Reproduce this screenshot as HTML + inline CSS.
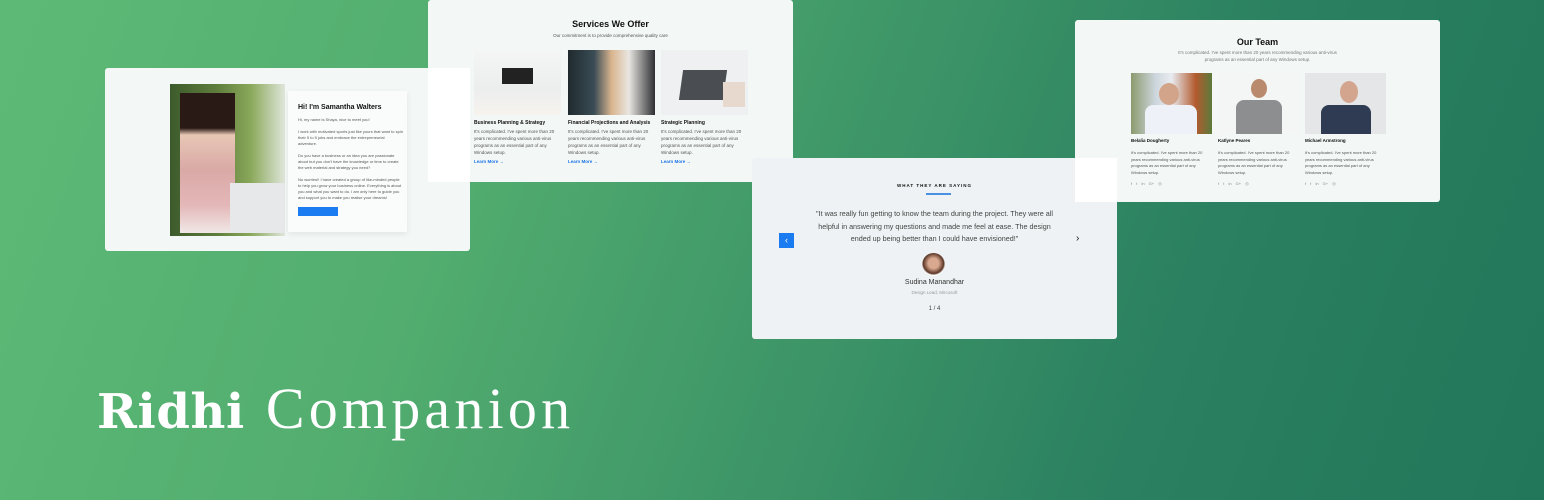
<!DOCTYPE html>
<html><head><meta charset="utf-8"><style>
*{margin:0;padding:0;box-sizing:border-box}
body{width:1544px;height:500px;overflow:hidden;position:relative;font-family:"Liberation Sans",sans-serif;
background:linear-gradient(110deg,#5dba76 0%,#52ad6f 30%,#3c9467 55%,#2a8060 75%,#22765a 100%)}
.c{position:absolute;background:#f3f7f5;border-radius:3px;overflow:hidden;color:#222}
.t{position:absolute;font-size:5px;line-height:7px;color:#555}
.h{position:absolute;font-weight:bold;color:#111}
.ph{position:absolute}
.lm{position:absolute;font-size:4.5px;color:#1a73e8;font-weight:bold}
</style></head><body>
<!-- card1 -->
<div class="c" style="left:105px;top:68px;width:365px;height:183px">
 <div class="ph" style="left:65px;top:16px;width:115px;height:152px;background:linear-gradient(90deg,#3d5a2c,#5e7d3c 40%,#8aa85a 70%,#dfe6da)"></div>
 <div class="ph" style="left:75px;top:25px;width:55px;height:140px;background:linear-gradient(180deg,#2a1a15 0,#2a1a15 25%,#e8c7b5 30%,#d9a9a6 55%,#e4b7b8 80%,#f0e8e6)"></div>
 <div class="ph" style="left:125px;top:115px;width:55px;height:50px;background:#e6e8ea"></div>
 <div class="ph" style="left:183px;top:23px;width:119px;height:141px;background:#fafbfb;box-shadow:0 2px 6px rgba(0,0,0,.08)"></div>
 <div class="h" style="left:193px;top:36px;font-size:7px">Hi! I'm Samantha Walters</div>
 <div class="t" style="left:193px;top:49px;width:105px;font-size:4px;line-height:6px">Hi, my name is Shaya, nice to meet you!<br><br style="line-height:3px">I work with motivated sports just like yours that want to spin their 5 to 5 jobs and embrace the entrepreneurial adventure.<br><br style="line-height:3px">Do you have a business or an idea you are passionate about but you don't have the knowledge or time to create the web material and strategy you need?<br><br style="line-height:3px">No worries!! I have created a group of like-minded people to help you grow your business online. Everything is about you and what you want to do. I am only here to guide you and support you to make you realise your dreams!</div>
 <div class="ph" style="left:193px;top:139px;width:40px;height:9px;background:#1a7cf0"></div>
</div>
<!-- card2 -->
<div class="c" style="left:428px;top:0;width:365px;height:182px">
 <div class="h" style="left:0;width:365px;text-align:center;top:19px;font-size:9px">Services We Offer</div>
 <div class="t" style="left:0;width:365px;text-align:center;top:32px;font-size:4.5px">Our commitment is to provide comprehensive quality care</div>
 <div class="ph" style="left:46px;top:50px;width:87px;height:65px;background:linear-gradient(180deg,#f4f5f5,#eceeee 60%,#f7f3ee)"><div style="position:absolute;left:28px;top:18px;width:31px;height:16px;background:#222"></div></div>
 <div class="ph" style="left:140px;top:50px;width:87px;height:65px;background:linear-gradient(90deg,#1f2a2e,#3a4c55 30%,#d9b48e 50%,#e8e6e2 70%,#2e2f33)"></div>
 <div class="ph" style="left:233px;top:50px;width:87px;height:65px;background:#eef0f1"><div style="position:absolute;left:20px;top:20px;width:44px;height:30px;background:#4a4d52;transform:skewX(-8deg)"></div><div style="position:absolute;left:62px;top:32px;width:22px;height:25px;background:#e8d9cf"></div></div>
 <div class="h" style="left:46px;top:120px;font-size:5px">Business Planning &amp; Strategy</div>
 <div class="h" style="left:140px;top:120px;font-size:5px">Financial Projections and Analysis</div>
 <div class="h" style="left:233px;top:120px;font-size:5px">Strategic Planning</div>
 <div class="t" style="left:46px;top:128px;width:86px;font-size:4.5px">It's complicated. I've spent more than 20 years recommending various anti-virus programs as an essential part of any Windows setup.</div>
 <div class="t" style="left:140px;top:128px;width:86px;font-size:4.5px">It's complicated. I've spent more than 20 years recommending various anti-virus programs as an essential part of any Windows setup.</div>
 <div class="t" style="left:233px;top:128px;width:86px;font-size:4.5px">It's complicated. I've spent more than 20 years recommending various anti-virus programs as an essential part of any Windows setup.</div>
 <div class="lm" style="left:46px;top:159px">Learn More →</div><div class="lm" style="left:140px;top:159px">Learn More →</div><div class="lm" style="left:233px;top:159px">Learn More →</div>
</div>
<div style="position:absolute;left:428px;top:68px;width:42px;height:114px;background:#fff"></div>
<!-- card3 -->
<div class="c" style="left:752px;top:158px;width:365px;height:181px;background:#eef2f4">
 <div class="h" style="left:0;width:365px;text-align:center;top:25px;font-size:4.5px;letter-spacing:1px">WHAT THEY ARE SAYING</div>
 <div class="ph" style="left:174px;top:35px;width:25px;height:1.5px;background:#4a90e2"></div>
 <div class="t" style="left:60px;width:245px;text-align:center;top:50px;font-size:7.2px;line-height:12.5px;color:#444">"It was really fun getting to know the team during the project. They were all helpful in answering my questions and made me feel at ease. The design ended up being better than I could have envisioned!"</div>
 <div class="ph" style="left:27px;top:75px;width:15px;height:15px;background:#1a7cf0;color:#fff;font-size:9px;text-align:center;line-height:15px">‹</div>
 <div class="ph" style="left:324px;top:75px;font-size:10px;color:#111">›</div>
 <div class="ph" style="left:170px;top:95px;width:23px;height:23px;border-radius:50%;background:radial-gradient(circle at 50% 45%,#d9a98f 30%,#5a3426 60%,#fff 70%)"></div>
 <div class="t" style="left:0;width:365px;text-align:center;top:121px;font-size:7px;color:#333">Sudina Manandhar</div>
 <div class="t" style="left:0;width:365px;text-align:center;top:131px;font-size:4.5px;color:#999">Design Lead, Mircosoft</div>
 <div class="t" style="left:0;width:365px;text-align:center;top:148px;font-size:6px;color:#444">1 / 4</div>
</div>
<!-- card4 -->
<div class="c" style="left:1075px;top:20px;width:365px;height:182px">
 <div class="h" style="left:0;width:365px;text-align:center;top:17px;font-size:9px">Our Team</div>
 <div class="t" style="left:100px;width:165px;text-align:center;top:29px;font-size:4.5px;color:#777">It's complicated. I've spent more than 20 years recommending various anti-virus programs as an essential part of any Windows setup.</div>
 <div class="ph" style="left:56px;top:53px;width:81px;height:61px;background:linear-gradient(90deg,#8c9a6e,#cdd6dc 30%,#e8ecf1 50%,#b35a2e 80%,#5a7a3a)"><div style="position:absolute;left:28px;top:10px;width:20px;height:22px;border-radius:50%;background:#d2a48a"></div><div style="position:absolute;left:14px;top:32px;width:52px;height:29px;background:#eef2f8;border-radius:8px 8px 0 0"></div></div>
 <div class="ph" style="left:143px;top:53px;width:81px;height:61px;background:#f4f5f5"><div style="position:absolute;left:33px;top:6px;width:16px;height:19px;border-radius:50%;background:#b98a6e"></div><div style="position:absolute;left:18px;top:27px;width:46px;height:34px;background:#8d8e90;border-radius:8px 8px 0 0"></div></div>
 <div class="ph" style="left:230px;top:53px;width:81px;height:61px;background:#e4e6e7"><div style="position:absolute;left:35px;top:8px;width:18px;height:22px;border-radius:50%;background:#d4a58e"></div><div style="position:absolute;left:16px;top:32px;width:50px;height:29px;background:#2f3b52;border-radius:8px 8px 0 0"></div></div>
 <div class="h" style="left:56px;top:118px;font-size:4.5px">Belalia Dougherty</div>
 <div class="h" style="left:143px;top:118px;font-size:4.5px">Katlyne Peares</div>
 <div class="h" style="left:230px;top:118px;font-size:4.5px">Michael Armstrong</div>
 <div class="t" style="left:56px;top:130px;width:76px;font-size:4px;line-height:6.5px">It's complicated. I've spent more than 20 years recommending various anti-virus programs as an essential part of any Windows setup.</div>
 <div class="t" style="left:143px;top:130px;width:76px;font-size:4px;line-height:6.5px">It's complicated. I've spent more than 20 years recommending various anti-virus programs as an essential part of any Windows setup.</div>
 <div class="t" style="left:230px;top:130px;width:76px;font-size:4px;line-height:6.5px">It's complicated. I've spent more than 20 years recommending various anti-virus programs as an essential part of any Windows setup.</div>
 <div class="t" style="left:56px;top:160px;font-size:4px;color:#888;word-spacing:3px">f t in G+ ◎</div>
 <div class="t" style="left:143px;top:160px;font-size:4px;color:#888;word-spacing:3px">f t in G+ ◎</div>
 <div class="t" style="left:230px;top:160px;font-size:4px;color:#888;word-spacing:3px">f t in G+ ◎</div>
</div>
<div style="position:absolute;left:1075px;top:158px;width:42px;height:44px;background:#fff"></div>
<!-- title -->
<div style="position:absolute;left:97px;top:379px;font-family:'Liberation Serif',serif;font-size:58px;line-height:59px;color:#fff;white-space:nowrap"><b style="font-family:'DejaVu Serif',serif;font-size:48px;letter-spacing:0.6px">Ridhi</b><span style="display:inline-block;width:21px"></span><span style="letter-spacing:4.2px">Companion</span></div>
</body></html>
